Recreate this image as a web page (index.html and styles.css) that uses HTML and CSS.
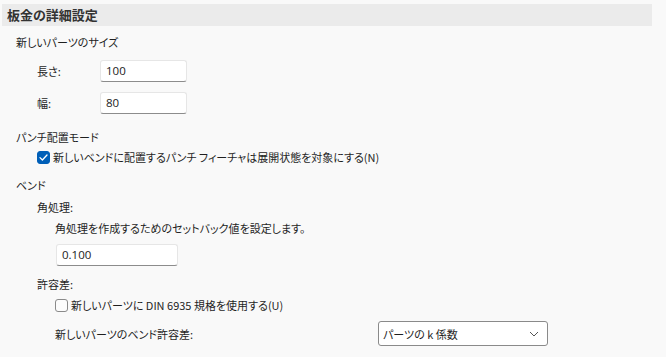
FILE: index.html
```html
<!DOCTYPE html>
<html lang="ja">
<head>
    <meta charset="UTF-8">
    <title>板金の詳細設定</title>
    <link rel="stylesheet" href="styles.css">
</head>
<body>
<div class="panel">
    <div class="header">板金の詳細設定</div>

    <div class="row sec">新しいパーツのサイズ</div>
    <div class="row field f1">
        <span class="lbl">長さ:</span>
        <div class="input w87">100</div>
    </div>
    <div class="row field f2">
        <span class="lbl">幅:</span>
        <div class="input w87">80</div>
    </div>

    <div class="row sec s2">パンチ配置モード</div>
    <div class="row chk ind1">
        <span class="box on">
            <svg width="9" height="7" viewBox="0 0 9 7"><path d="M1 3.6 L3.4 6 L8 1" fill="none" stroke="#fff" stroke-width="1.3" stroke-linecap="round" stroke-linejoin="round"/></svg>
        </span>
        <span>新しいベンドに配置するパンチ フィーチャは展開状態を対象にする(N)</span>
    </div>

    <div class="row sec s3">ベンド</div>
    <div class="row ind1 r-corner">角処理:</div>
    <div class="row ind2 r-desc">角処理を作成するためのセットバック値を設定します。</div>
    <div class="row ind2 r-inp">
        <div class="input w122">0.100</div>
    </div>

    <div class="row ind1 r-tol">許容差:</div>
    <div class="row chk ind2 r-din">
        <span class="box"></span>
        <span>新しいパーツに DIN 6935 規格を使用する(U)</span>
    </div>
    <div class="row ind2 r-sel">
        <span class="lbl2">新しいパーツのベンド許容差:</span>
        <div class="select">
            <span>パーツの k 係数</span>
            <svg width="10" height="6" viewBox="0 0 10 6"><path d="M1 1 L5 5 L9 1" fill="none" stroke="#555" stroke-width="1"/></svg>
        </div>
    </div>
</div>
</body>
</html>
```

FILE: styles.css
```css
* {
    margin: 0;
    padding: 0;
    box-sizing: border-box;
}
html, body {
    height: 100%;
    background: #f9f9f9;
    overflow: hidden;
}
body {
    font-family: "Noto Sans CJK JP", "Noto Sans", sans-serif;
    font-size: 11px;
    color: #1f1f1f;
    font-feature-settings: "palt";
}
.panel {
    padding-top: 4px;
}
.header {
    margin-left: 2px;
    width: 650px;
    height: 22px;
    line-height: 22px;
    padding-left: 5px;
    background: #ebebeb;
    font-size: 13px;
    font-weight: bold;
    color: #333;
}
.row {
    display: flex;
    align-items: center;
    height: 20px;
}
.sec {
    padding-left: 16px;
    margin-top: 6px;
}
.s2 { margin-top: 13px; }
.s3 { margin-top: 8px; }
.field {
    height: 22px;
    padding-left: 37px;
}
.f1 { margin-top: 8px; }
.f2 { margin-top: 10px; }
.lbl {
    width: 63px;
}
.input {
    height: 22px;
    line-height: 20px;
    padding-left: 5px;
    background: #fff;
    border: 1px solid #e6e6e6;
    border-bottom: 1px solid #8c8c8c;
    border-radius: 3px;
    color: #1a1a1a;
    font-family: "Open Sans", "Noto Sans", sans-serif;
    font-size: 11.5px;
}
.w87 { width: 87px; }
.w122 { width: 122px; }
.ind1 { padding-left: 37px; }
.ind2 { padding-left: 55px; }
.chk .box {
    width: 13px;
    height: 13px;
    margin-right: 3px;
    border: 1px solid #8a8a8a;
    border-radius: 3px;
    background: #fcfcfc;
    display: flex;
    align-items: center;
    justify-content: center;
}
.chk .box.on {
    background: #005fb8;
    border-color: #005fb8;
}
.r-corner { margin-top: 2px; }
.r-desc { margin-top: 1px; }
.r-inp {
    height: 22px;
    margin-top: 6px;
    padding-left: 56px;
}
.r-tol { margin-top: 8px; }
.r-din { margin-top: 1px; }
.r-sel {
    height: 25px;
    margin-top: 6px;
}
.lbl2 {
    width: 323px;
}
.select {
    width: 170px;
    height: 25px;
    border: 1px solid #8a8a8a;
    border-radius: 3px;
    background: #fff;
    display: flex;
    align-items: center;
    justify-content: space-between;
    padding: 0 8px 0 4px;
}
```
